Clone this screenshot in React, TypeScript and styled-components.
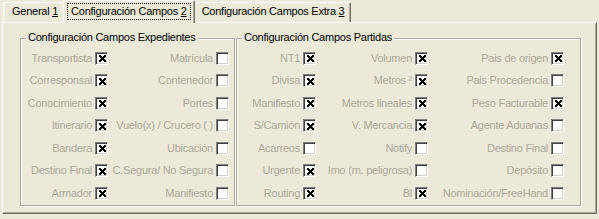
import React from "react"
import styled, { createGlobalStyle } from "styled-components"

const GlobalStyle = createGlobalStyle`
  html, body {
    margin: 0;
    padding: 0;
    background: #ece9d8;
  }
  body {
    font-family: "Liberation Sans", Arial, sans-serif;
    font-size: 11px;
    letter-spacing: -0.25px;
    color: #000;
  }
`

type Field = { label: string; checked: boolean }

const expedientes: Field[][] = [
  [
    { label: "Transportista", checked: true },
    { label: "Corresponsal", checked: true },
    { label: "Conocimiento", checked: true },
    { label: "Itinerario", checked: true },
    { label: "Bandera", checked: true },
    { label: "Destino Final", checked: true },
    { label: "Armador", checked: true },
  ],
  [
    { label: "Matrícula", checked: false },
    { label: "Contenedor", checked: false },
    { label: "Portes", checked: false },
    { label: "Vuelo(x) / Crucero ( )", checked: false },
    { label: "Ubicación", checked: false },
    { label: "C.Segura/ No Segura", checked: false },
    { label: "Manifiesto", checked: false },
  ],
]

const partidas: Field[][] = [
  [
    { label: "NT1", checked: true },
    { label: "Divisa", checked: true },
    { label: "Manifiesto", checked: true },
    { label: "S/Camión", checked: true },
    { label: "Acarreos", checked: false },
    { label: "Urgente", checked: true },
    { label: "Routing", checked: true },
  ],
  [
    { label: "Volumen", checked: true },
    { label: "Metros ²", checked: true },
    { label: "Metros lineales", checked: true },
    { label: "V. Mercancia", checked: true },
    { label: "Notify", checked: false },
    { label: "Imo (m. peligrosa)", checked: false },
    { label: "Bl", checked: true },
  ],
  [
    { label: "Pais de origen", checked: true },
    { label: "Pais Procedencia", checked: false },
    { label: "Peso Facturable", checked: true },
    { label: "Agente Aduanas", checked: false },
    { label: "Destino Final", checked: false },
    { label: "Depósito", checked: false },
    { label: "Nominación/FreeHand", checked: false },
  ],
]

// pixel rows of the classic bold "x" check mark
const xRows: [number, number][][] = [
  [[0, 2], [5, 2]],
  [[0, 3], [4, 3]],
  [[1, 5]],
  [[2, 3]],
  [[1, 5]],
  [[0, 3], [4, 3]],
  [[0, 2], [5, 2]],
]

const CheckBox: React.FC<{ checked: boolean }> = ({ checked }) => (
  <S.Box>
    {checked && (
      <svg width="7" height="7" viewBox="0 0 7 7" shapeRendering="crispEdges">
        {xRows.map((runs, y) =>
          runs.map(([x, w], i) => <rect key={y + "-" + i} x={x} y={y} width={w} height={1} fill="#000" />)
        )}
      </svg>
    )}
  </S.Box>
)

const GroupBox: React.FC<{ title: string; width: number; cols: string; columns: Field[][] }> = ({
  title,
  width,
  cols,
  columns,
}) => (
  <S.Group $width={width}>
    <S.GroupTitle>{title}</S.GroupTitle>
    <S.Grid $cols={cols}>
      {columns.map((col, ci) =>
        col.map((f, ri) => (
          <S.Cell key={ci + "-" + ri}>
            <S.Label>{f.label}</S.Label>
            <CheckBox checked={f.checked} />
          </S.Cell>
        ))
      )}
    </S.Grid>
  </S.Group>
)

export default function App() {
  return (
    <S.Page>
      <GlobalStyle />
      <S.TabStrip>
        <S.Tab>
          <span>
            General <u>1</u>
          </span>
        </S.Tab>
        <S.Tab $active>
          <S.Focus>
            Configuración Campos <u>2</u>
          </S.Focus>
        </S.Tab>
        <S.Tab>
          <span>
            Configuración Campos Extra <u>3</u>
          </span>
        </S.Tab>
      </S.TabStrip>
      <S.Panel>
        <GroupBox title="Configuración Campos Expedientes" width={215} cols="87px 121px" columns={expedientes} />
        <GroupBox title="Configuración Campos Partidas" width={345} cols="79px 112px 136px" columns={partidas} />
      </S.Panel>
    </S.Page>
  )
}

const S = {
  Page: styled.div`
    padding: 0 2px;
    width: 599px;
    height: 219px;
    box-sizing: border-box;
  `,

  TabStrip: styled.div`
    display: flex;
    align-items: flex-end;
    height: 22px;
    padding-left: 1px;
  `,

  Tab: styled.div<{ $active?: boolean }>`
    position: relative;
    display: flex;
    align-items: ${(p) => (p.$active ? "flex-start" : "center")};
    box-sizing: border-box;
    height: ${(p) => (p.$active ? "23px" : "20px")};
    margin: ${(p) => (p.$active ? "0 -2px -1px -2px" : "0")};
    padding: ${(p) => (p.$active ? "2px 3px 0 3px" : "0 6px 3px 8px")};
    background: #ece9d8;
    border-top: 1px solid #fff;
    border-left: 1px solid #fff;
    border-right: 1px solid #716f64;
    border-radius: 2px 2px 0 0;
    box-shadow: inset -1px 0 0 #aca899;
    line-height: 13px;
    white-space: nowrap;
    z-index: ${(p) => (p.$active ? 2 : 1)};
  `,

  Focus: styled.span`
    padding: 1px 3px;
    border: 1px dotted #000;
  `,

  Panel: styled.div`
    display: flex;
    gap: 1px;
    box-sizing: border-box;
    width: 595px;
    height: 192px;
    padding: 15px 0 0 17px;
    border-top: 1px solid #fff;
    border-left: 1px solid #fff;
    border-right: 1px solid #716f64;
    border-bottom: 1px solid #716f64;
    box-shadow: inset -1px -1px 0 #aca899;
  `,

  Group: styled.div<{ $width: number }>`
    display: flex;
    flex-direction: column;
    align-items: flex-start;
    box-sizing: border-box;
    width: ${(p) => p.$width}px;
    height: 168px;
    border: 1px solid #aca899;
    box-shadow: inset 1px 1px 0 #fff, 1px 1px 0 #fff;
  `,

  GroupTitle: styled.span`
    margin: -8px 0 0 5px;
    padding: 0 2px;
    line-height: 13px;
    background: #ece9d8;
    white-space: nowrap;
  `,

  Grid: styled.div<{ $cols: string }>`
    display: grid;
    grid-template-columns: ${(p) => p.$cols};
    grid-template-rows: repeat(7, 22.5px);
    grid-auto-flow: column;
    margin-top: 3px;
  `,

  Cell: styled.div`
    display: flex;
    justify-content: flex-end;
    align-items: center;
    gap: 3px;
    min-width: 0;
  `,

  Label: styled.span`
    color: #aca899;
    white-space: nowrap;
    line-height: 13px;
  `,

  Box: styled.span`
    display: flex;
    align-items: center;
    justify-content: center;
    flex: none;
    box-sizing: border-box;
    width: 13px;
    height: 13px;
    background: #fff;
    border: 1px solid;
    border-color: #808080 #fff #fff #808080;
    box-shadow: inset 1px 1px 0 #404040, inset -1px -1px 0 #d4d0c8;
    padding: 1px 0 0 1px;
  `,
}
